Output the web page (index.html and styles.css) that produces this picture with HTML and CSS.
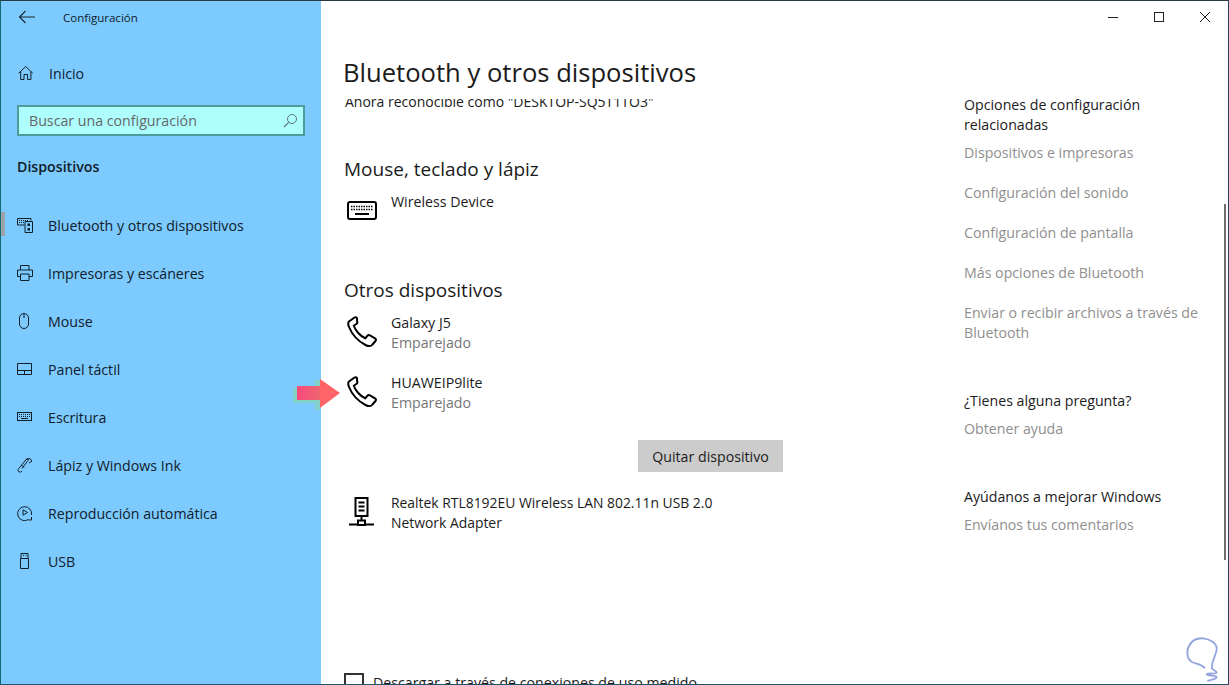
FILE: index.html
```html
<!DOCTYPE html>
<html lang="es">
<head>
<meta charset="utf-8">
<title>Configuración</title>
<link rel="stylesheet" href="styles.css">
</head>
<body>
<div class="window">
  <aside class="sidebar">
    <div class="titlebar">
      <svg class="back" width="18" height="14" viewBox="0 0 18 14"><path d="M7.500 1L1.500 7l6 6M1.500 7H17" fill="none" stroke="#1a2a33" stroke-width="1.100"/></svg>
      <span class="app-title">Configuración</span>
    </div>
    <div class="home">
      <svg class="nav-icon" width="16" height="16" viewBox="0 0 16 16"><path d="M.7 8.300L7.700 1.500l7.100 6.800M2.700 6.600V14.500H6V9.500H9.600V14.500H12.900V6.600" fill="none" stroke="#10202a" stroke-width="1"/></svg>
      <span>Inicio</span>
    </div>
    <div class="search">
      <span>Buscar una configuración</span>
      <svg width="15" height="15" viewBox="0 0 15 15"><circle cx="9" cy="6" r="4.500" fill="none" stroke="#5f7878" stroke-width="1"/><path d="M5.700 9.300L1 14" stroke="#5f7878" stroke-width="1.200"/></svg>
    </div>
    <div class="section">Dispositivos</div>
    <nav class="nav">
      <div class="nav-item active">
        <svg class="nav-icon" width="16" height="16" viewBox="0 0 16 16"><path d="M.5 1.500h13.500M.5 1.500v6.500h7M14 1.500v2M8 4.500h7.500v11h-7.500z" fill="none" stroke="#10202a"/><path d="M2 3.500h10M2 5.500h5" stroke="#10202a" stroke-dasharray="1 1"/><rect x="10.500" y="6.500" width="2.500" height="2.500" fill="#10202a"/><rect x="10.500" y="11" width="2.500" height="2.500" fill="#10202a"/></svg>
        <span>Bluetooth y otros dispositivos</span>
      </div>
      <div class="nav-item">
        <svg class="nav-icon" width="16" height="16" viewBox="0 0 16 16"><path d="M3.500 5V.5h8.500V5M3.500 11.500H.5V5h15v6.500h-3.500M3.500 9h8.500v6.500H3.500z" fill="none" stroke="#10202a"/></svg>
        <span>Impresoras y escáneres</span>
      </div>
      <div class="nav-item">
        <svg class="nav-icon" width="16" height="16" viewBox="0 0 16 16"><path d="M3 5a4.500 4.500 0 0 1 9 0v6a4.500 4.500 0 0 1-9 0zM7.500.5V5" transform="translate(-.5 0)" fill="none" stroke="#10202a"/></svg>
        <span>Mouse</span>
      </div>
      <div class="nav-item">
        <svg class="nav-icon" width="16" height="16" viewBox="0 0 16 16"><path d="M.5 2.500h14v11H.5zM.5 9.500h14M7.500 9.500v4" fill="none" stroke="#10202a"/></svg>
        <span>Panel táctil</span>
      </div>
      <div class="nav-item">
        <svg class="nav-icon" width="16" height="16" viewBox="0 0 16 16"><rect x=".5" y="3.500" width="14" height="8" fill="none" stroke="#10202a"/><path d="M2 5.500h11M2 7.500h11" stroke="#10202a" stroke-dasharray="1 1"/><path d="M4 9.500h7" stroke="#10202a"/></svg>
        <span>Escritura</span>
      </div>
      <div class="nav-item">
        <svg class="nav-icon" width="16" height="16" viewBox="0 0 16 16"><path d="M5 14.500c-2 1-4 .5-4-1.500 0-1 1-2 2-3l6.500-8c1-1 2.500.5 1.500 1.500L5 11.500M4.500 8L7 10.500M9 2.500L13 1.500l2 2.500-3 2" fill="none" stroke="#10202a"/></svg>
        <span>Lápiz y Windows Ink</span>
      </div>
      <div class="nav-item">
        <svg class="nav-icon" width="16" height="16" viewBox="0 0 16 16"><path d="M11.500 14.500a7 7 0 1 1 3-4.500M14.500 12v3h-3" fill="none" stroke="#10202a"/><path d="M6 4.800v5.400l4.500-2.700z" fill="none" stroke="#10202a"/></svg>
        <span>Reproducción automática</span>
      </div>
      <div class="nav-item">
        <svg class="nav-icon" width="16" height="16" viewBox="0 0 16 16"><path d="M4 .5h7v5H4zM3.500 5.500h8v10h-8z" fill="none" stroke="#10202a"/><path d="M6 2.500h1M8.500 2.500h1" stroke="#10202a"/></svg>
        <span>USB</span>
      </div>
    </nav>
  </aside>
  <main class="content">
    <div class="controls">
      <svg width="12" height="12" viewBox="0 0 12 12"><path d="M1 6.500h10" stroke="#222"/></svg>
      <svg width="12" height="12" viewBox="0 0 12 12"><rect x="1.500" y="1.500" width="9" height="9" fill="none" stroke="#222"/></svg>
      <svg width="12" height="12" viewBox="0 0 12 12"><path d="M1 1l10 10M11 1L1 11" stroke="#222" fill="none"/></svg>
    </div>
    <div class="columns">
      <section class="main-col">
        <h1>Bluetooth y otros dispositivos</h1>
        <div class="clip-line"><p>Ahora reconocible como "DESKTOP-SQ5T1TO3"</p></div>
        <h2 class="h-mouse">Mouse, teclado y lápiz</h2>
        <div class="device">
          <svg class="dev-icon" width="32" height="32" viewBox="0 0 32 32"><rect x="2" y="8" width="28" height="17" rx="2" fill="none" stroke="#000" stroke-width="2"/><path d="M5 12.500h22M5 15.500h22" stroke="#000" stroke-width="1.500" stroke-dasharray="1.500 1"/><path d="M9 20h14" stroke="#000" stroke-width="2"/></svg>
          <div class="dev-text"><div>Wireless Device</div></div>
        </div>
        <h2 class="h-otros">Otros dispositivos</h2>
        <div class="device">
          <svg class="dev-icon phone" width="32" height="32" viewBox="0 0 32 32"><path d="M8.500 1.500L3 5.500c-1 1-1 3 0 5.500 3 7.500 9 14 16.500 18 3 1.500 5.500 1.500 7-.5l3-3.500c.8-1 .5-2-.5-2.700l-5-3c-1-.5-2-.3-2.700.5l-2 2.500c-5-2-10-8-11.500-12.500l2.800-2c.9-.7 1-1.500.5-2.500L11 2c-.6-.8-1.600-1-2.500-.5z" fill="none" stroke="#000" stroke-width="2"/></svg>
          <div class="dev-text"><div>Galaxy J5</div><div class="muted">Emparejado</div></div>
        </div>
        <div class="device second">
          <svg class="dev-icon phone" width="32" height="32" viewBox="0 0 32 32"><path d="M8.500 1.500L3 5.500c-1 1-1 3 0 5.500 3 7.500 9 14 16.500 18 3 1.500 5.500 1.500 7-.5l3-3.500c.8-1 .5-2-.5-2.700l-5-3c-1-.5-2-.3-2.700.5l-2 2.500c-5-2-10-8-11.500-12.500l2.800-2c.9-.7 1-1.500.5-2.500L11 2c-.6-.8-1.600-1-2.500-.5z" fill="none" stroke="#000" stroke-width="2"/></svg>
          <div class="dev-text"><div>HUAWEIP9lite</div><div class="muted">Emparejado</div></div>
        </div>
        <div class="btn-row"><button class="btn">Quitar dispositivo</button></div>
        <div class="device third">
          <svg class="dev-icon" width="32" height="32" viewBox="0 0 32 32"><path d="M9.500 3h12v18h-12zM12.500 7.500h6M12.500 11.500h6M12.500 15.500h6M15.500 21v4M12 25.500h7v4.500h-7zM3 29.500h9M19 29.500h9" fill="none" stroke="#000" stroke-width="2"/></svg>
          <div class="dev-text adapter"><div>Realtek RTL8192EU Wireless LAN 802.11n USB 2.0</div><div>Network Adapter</div></div>
        </div>
        <div class="spacer"></div>
        <div class="metered"><span class="box"></span><span>Descargar a través de conexiones de uso medido</span></div>
      </section>
      <aside class="related">
        <h3>Opciones de configuración relacionadas</h3>
        <a>Dispositivos e impresoras</a>
        <a>Configuración del sonido</a>
        <a>Configuración de pantalla</a>
        <a>Más opciones de Bluetooth</a>
        <a>Enviar o recibir archivos a través de Bluetooth</a>
        <h3 class="q">¿Tienes alguna pregunta?</h3>
        <a>Obtener ayuda</a>
        <h3 class="q2">Ayúdanos a mejorar Windows</h3>
        <a>Envíanos tus comentarios</a>
      </aside>
    </div>
    <div class="scrollbar"></div>
    <svg class="watermark" width="40" height="48" viewBox="0 0 40 48"><path d="M23 33.300C20 29 14 29 10 27C5 24 4 16 7 11C10 5 16 3 21 3.300C28 4 35 8 34.700 14C34.500 20 30 24 29.700 33.300C31 35 35 36 34.700 37.700C34 39.500 26 37.500 24.700 39.500C25 41 35 40 34.700 42.300C34 44 28 45 25.300 46" fill="none" stroke="#94a4dc" stroke-width="1.800"/></svg>
    <svg class="arrow" width="50" height="36" viewBox="0 0 50 36"><defs><linearGradient id="arrow-body"><stop offset="0" stop-color="#f8497c"/><stop offset="1" stop-color="#ee6670"/></linearGradient></defs><path d="M1 11H23V3H28V33H23V26H1z" fill="#82d0c8"/><path d="M5 9H28V23H5z" fill="url(#arrow-body)"/><path d="M28 2L48 16L28 31z" fill="#ff6468"/></svg>
  </main>
</div>
</body>
</html>
```
FILE: styles.css
```css
* { box-sizing: border-box; }
html, body { margin: 0; height: 100%; overflow: hidden; background: #fff; }
body { font-family: "Open Sans", "Noto Sans", sans-serif; font-size: 14.2px; color: #1b1b1b; }
.window { display: flex; width: 1229px; height: 685px; border-top: 1px solid #2b3a42; border-left: 1px solid #0f6b70; border-bottom: 1px solid #23506b; border-right: 1px solid #2c3e6a; overflow: hidden; position: relative; }
.sidebar { width: 320px; flex: none; background: #7dcaff; color: #10202a; display: flex; flex-direction: column; }
.titlebar { height: 32px; display: flex; align-items: center; padding-left: 17px; }
.back { margin-right: 27px; }
.app-title { font-size: 11.5px; }
.home { display: flex; align-items: center; height: 48px; margin-top: 16px; padding-left: 17px; }
.nav-icon { flex: none; margin-right: 15px; }
.search { margin: 8px 16px 0; height: 31px; border: 2px solid #4d9c9c; background: #aefefe; display: flex; align-items: center; justify-content: space-between; padding: 0 5px 0 10px; color: #666; }
.section { font-weight: 600; margin: 19px 0 0 16px; height: 24px; line-height: 24px; }
.nav { margin-top: 22px; display: flex; flex-direction: column; }
.nav-item { height: 48px; display: flex; align-items: center; padding-left: 16px; position: relative; }
.nav-item.active::before { content: ""; position: absolute; left: 0; top: 11px; width: 4px; height: 24px; background: #9aa3a6; }
.content { flex: 1; position: relative; min-width: 0; }
.controls { position: absolute; top: 10px; right: 17px; display: flex; gap: 34px; }
.columns { display: flex; height: 100%; }
.main-col { width: 622px; padding: 0 0 0 22px; display: flex; flex-direction: column; height: 100%; }
h1 { margin: 54px 0 0; font-size: 25.6px; font-weight: 400; line-height: 35px; color: #1b1b1b; }
.clip-line { height: 12px; overflow: hidden; margin-top: 9px; }
.clip-line p { margin: -7px 0 0 2px; line-height: 20px; font-size: 14px; }
h2 { font-size: 19px; font-weight: 400; line-height: 26px; margin: 0 0 0 1px; }
.h-mouse { margin-top: 45px; }
.h-otros { margin-top: 51px; }
.device { display: flex; padding-left: 3px; line-height: 20px; margin-top: 10px; }
.device.second { margin-top: 20px; }
.device.third { margin-top: 21px; }
.dev-icon { flex: none; margin-right: 13px; margin-top: 2px; }
.phone { margin-top: 3px; margin-bottom: -1px; }
.adapter { font-size: 13.9px; }
.muted { color: #767676; }
.btn-row { display: flex; justify-content: flex-end; margin-top: 27px; padding-right: 160px; }
.btn { width: 145px; height: 32px; border: 0; background: #ccc; font: inherit; color: #1b1b1b; }
.spacer { flex: 1; }
.metered { display: flex; align-items: flex-start; gap: 9px; height: 11px; overflow: hidden; padding-left: 1px; }
.box { width: 20px; height: 20px; border: 2px solid #333; flex: none; }
.related { width: 240px; margin-left: 21px; padding-top: 94px; display: flex; flex-direction: column; line-height: 20px; }
.related h3 { font-size: inherit; font-weight: 400; margin: 0; color: #1b1b1b; }
.related a { color: #8f8f8f; margin-top: 8px; margin-bottom: 12px; }
.related h3 + a { margin-top: 8px; }
.related .q { margin-top: 36px; }
.related .q2 { margin-top: 36px; }
.scrollbar { position: absolute; right: 2px; top: 203px; width: 2px; height: 356px; background: #6e6e6e; }
.watermark { position: absolute; right: 6px; bottom: 1px; }
.arrow { position: absolute; left: -29px; top: 376px; }
```
